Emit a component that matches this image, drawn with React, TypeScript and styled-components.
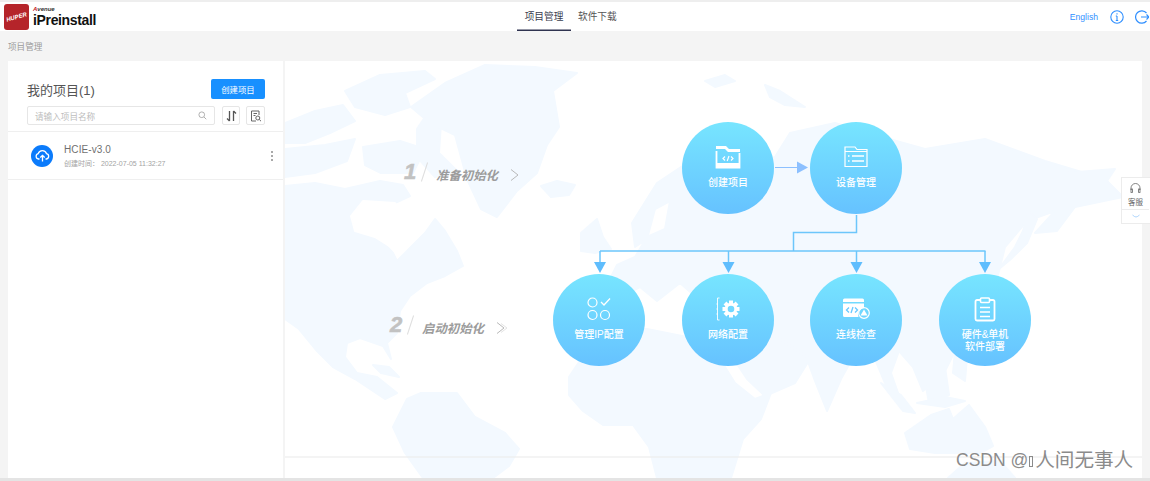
import React from 'react';
import styled, { createGlobalStyle } from 'styled-components';

const GlobalStyle = createGlobalStyle`
  html, body {
    margin: 0;
    padding: 0;
    background: #f4f4f4;
    font-family: "Liberation Sans", "Noto Sans CJK SC", sans-serif;
  }
  * {
    box-sizing: border-box;
  }
`;

const Page = styled.div`
  width: 1150px;
  height: 481px;
  overflow: hidden;
  position: relative;
  background: #f4f4f4;
  border-top: 2px solid #eeeeee;
  border-bottom: 3px solid #e4e4e4;
`;

// ---------------------------------------------
// header
// ---------------------------------------------
const Header = styled.header`
  height: 29px;
  background: #fff;
  display: grid;
  grid-template-columns: 517px auto 1fr;
  align-items: stretch;
`;

const Brand = styled.div`
  display: flex;
  align-items: center;
  gap: 4px;
  padding-left: 4px;
`;

const LogoMark = styled.div`
  width: 25px;
  height: 26px;
  border-radius: 3px;
  background: #b5242a;
  color: #fff;
  font-size: 6px;
  font-style: italic;
  font-weight: 700;
  display: flex;
  align-items: center;
  justify-content: center;
  overflow: hidden;

  span {
    transform: rotate(-16deg);
  }
`;

const BrandText = styled.div`
  display: flex;
  flex-direction: column;

  small {
    font-size: 6px;
    line-height: 6px;
    margin-bottom: 1px;
    font-weight: 700;
    font-style: italic;
    color: #333;

    b {
      color: #c4161c;
    }
  }

  strong {
    font-size: 14px;
    line-height: 15px;
    font-weight: 700;
    letter-spacing: -0.35px;
    color: #111;
  }
`;

const Tabs = styled.nav`
  display: flex;
  gap: 7px;
`;

const Tab = styled.div<{ $active?: boolean }>`
  width: ${({ $active }) => ($active ? '54px' : '38px')};
  font-size: 9.7px;
  line-height: 29px;
  text-align: center;
  white-space: nowrap;
  color: ${({ $active }) => ($active ? '#3a3d50' : '#555')};
  box-shadow: ${({ $active }) => ($active ? 'inset 0 -1.5px 0 #2f3350' : 'none')};
`;

const HeaderActions = styled.div`
  display: flex;
  justify-content: flex-end;
  align-items: center;
  padding-right: 1px;
  color: #2f8fff;

  span {
    font-size: 8.6px;
    margin-right: 12px;
  }

  svg + svg {
    margin-left: 11px;
  }
`;

const Breadcrumb = styled.div`
  height: 30px;
  padding-left: 8px;
  display: flex;
  align-items: center;
  font-size: 8.6px;
  color: #9a9a9a;
`;

// ---------------------------------------------
// layout
// ---------------------------------------------
const Content = styled.div`
  display: flex;
  gap: 2px;
  padding-left: 8px;
  height: 417px;
`;

const Sidebar = styled.aside`
  width: 275px;
  background: #fff;
`;

const SidebarHead = styled.div`
  padding: 18px 18px 6px 19px;
  border-bottom: 1px solid #efefef;
`;

const TitleRow = styled.div`
  display: flex;
  justify-content: space-between;
  align-items: center;
  height: 20px;
  margin-bottom: 7px;

  h2 {
    margin: 0;
    font-size: 13px;
    font-weight: 400;
    color: #555;
  }
`;

const PrimaryButton = styled.button`
  width: 54px;
  height: 20px;
  border: 0;
  padding: 0;
  border-radius: 2px;
  background: #1890ff;
  color: #fff;
  font: inherit;
  font-size: 8.4px;
`;

const SearchRow = styled.div`
  display: flex;
  align-items: center;
  gap: 6px;
`;

const SearchBox = styled.div`
  width: 189px;
  height: 19px;
  margin-right: 1px;
  padding: 0 7px;
  border: 1px solid #e6e6e6;
  border-radius: 2px;
  display: flex;
  align-items: center;
  justify-content: space-between;
  font-size: 8.6px;
  color: #bdbdbd;
`;

const IconButton = styled.div`
  width: 18px;
  height: 19px;
  border: 1px solid #e6e6e6;
  border-radius: 2px;
  display: flex;
  align-items: center;
  justify-content: center;
  color: #666;

  & + & {
    width: 19px;
  }
`;

const ProjectRow = styled.div`
  height: 48px;
  padding: 0 10px 0 23px;
  border-bottom: 1px solid #efefef;
  display: flex;
  align-items: center;
  gap: 11px;
`;

const Avatar = styled.div`
  width: 22px;
  height: 22px;
  border-radius: 50%;
  background: #0b7bfb;
  display: flex;
  align-items: center;
  justify-content: center;
`;

const ProjectInfo = styled.div`
  flex: 1;

  h3 {
    margin: 0 0 3px;
    font-size: 10px;
    line-height: 13px;
    font-weight: 400;
    letter-spacing: 0.1px;
    color: #6f6f6f;
  }

  p {
    margin: 0;
    font-size: 7px;
    line-height: 9px;
    color: #a3a3a3;
  }
`;

const MoreDots = styled.div`
  display: flex;
  flex-direction: column;
  gap: 2px;

  i {
    width: 2px;
    height: 2px;
    border-radius: 50%;
    background: #8d8d8d;
  }
`;

// ---------------------------------------------
// diagram canvas
// ---------------------------------------------
const Main = styled.main`
  width: 857px;
  position: relative;
  background: #fff;
  overflow: hidden;
`;

const CanvasLayer = styled.svg`
  position: absolute;
  inset: 0;
`;

const BottomLine = styled.div`
  position: absolute;
  left: 0;
  right: 0;
  bottom: 20px;
  height: 2px;
  background: rgba(236, 236, 236, 0.6);
`;

const Node = styled.div<{ $cx: number; $cy: number }>`
  position: absolute;
  left: ${({ $cx }) => $cx - 46}px;
  top: ${({ $cy }) => $cy - 46}px;
  width: 92px;
  height: 92px;
  border-radius: 50%;
  padding-top: 22px;
  background: linear-gradient(180deg, #77e5ff 0%, #66c2ff 100%);
  color: #fff;
  display: flex;
  flex-direction: column;
  align-items: center;
`;

const NodeIcon = styled.div`
  height: 26px;
  display: flex;
  align-items: center;
  justify-content: center;
`;

const NodeLabel = styled.div`
  margin-top: 7px;
  font-size: 10px;
  line-height: 11.5px;
  font-weight: 500;
  text-align: center;
`;

const Step = styled.div<{ $x: number; $y: number }>`
  position: absolute;
  left: ${({ $x }) => $x}px;
  top: ${({ $y }) => $y}px;
  display: flex;
  align-items: center;
  color: #9c9c9c;

  em {
    width: 19px;
    font-size: 22px;
    line-height: 24px;
    font-weight: 700;
    color: #c2c2c2;
    -webkit-text-stroke: 0.6px #c2c2c2;
  }

  i {
    width: 1px;
    height: 20px;
    margin: 0 11px 0 1px;
    background: #dedede;
    transform: rotate(18deg);
  }

  strong {
    width: 74px;
    margin-top: 6px;
    font-size: 12.4px;
    font-style: italic;
    font-weight: 700;
    white-space: nowrap;
  }

  svg {
    margin-top: 6px;
  }
`;

const SideWidget = styled.div`
  position: absolute;
  left: 1121px;
  top: 175px;
  width: 32px;
  height: 47px;
  background: #fff;
  border: 1px solid #ececec;
  color: #666;
  text-align: center;
  padding-right: 3px;
  font-size: 7.5px;
`;

const WidgetTop = styled.div`
  height: 32px;
  padding-top: 5px;
  border-bottom: 1px solid #ececec;
  display: flex;
  flex-direction: column;
  align-items: center;
  gap: 3px;
`;

const WidgetBottom = styled.div`
  display: flex;
  justify-content: center;
  padding-top: 4px;
`;

const Watermark = styled.div`
  position: absolute;
  left: 956px;
  top: 445px;
  font-size: 17.5px;
  line-height: 26px;
  white-space: nowrap;
  color: #8b8b8b;
  text-shadow: 0 0 1px #fff;
  display: flex;
  align-items: center;

  b {
    font-size: 19.6px;
    font-weight: 400;
  }
`;

const Tofu = styled.span`
  width: 4px;
  height: 11px;
  margin: 2px 2px 0 1px;
  border: 1px solid #8b8b8b;
`;

// ---------------------------------------------
// drawings
// ---------------------------------------------
const LAND = [
  // north america
  'M0 125 L30 122 L60 128 L95 120 L118 124 L125 135 L110 142 L78 140 L66 155 L70 170 L95 178 L108 192 L112 200 L140 172 L150 158 L160 170 L172 190 L178 205 L160 215 L142 222 L125 235 L115 250 L112 272 L102 282 L106 298 L98 285 L75 277 L62 282 L60 296 L72 312 L92 316 L112 332 L100 338 L70 318 L48 306 L32 290 L14 268 L0 258 Z',
  // arctic islands
  'M0 62 L30 50 L58 44 L70 60 L45 72 L20 82 L0 82 Z',
  'M0 88 L40 84 L70 78 L62 100 L30 112 L0 116 Z',
  'M60 30 L95 14 L140 10 L150 18 L120 32 L125 46 L100 54 L70 46 Z',
  'M78 86 L115 80 L140 88 L128 112 L96 112 L80 104 Z',
  'M140 56 L156 62 L154 92 L172 110 L150 116 L132 96 L132 68 Z',
  // greenland
  'M126 46 L160 22 L200 4 L250 6 L292 12 L268 30 L274 66 L262 84 L252 112 L232 130 L212 156 L196 148 L182 118 L170 74 L145 62 Z',
  // iceland
  'M256 125 L272 120 L290 124 L284 134 L266 136 Z',
  // south america
  'M122 338 L136 332 L172 332 L190 356 L220 372 L234 388 L224 405 L208 417 L138 417 L120 392 L108 366 Z',
  // caribbean
  'M88 304 L104 306 L114 316 L96 312 Z',
  // britain + europe + asia
  'M296 172 L312 158 L318 176 L326 188 L310 192 L296 190 Z',
  'M347 162 L372 122 L405 100 L430 94 L440 112 L432 128 L455 110 L490 96 L505 72 L550 62 L590 74 L640 88 L700 78 L760 100 L820 118 L838 136 L790 146 L772 170 L750 172 L770 150 L742 160 L720 186 L712 218 L700 244 L686 262 L672 286 L660 310 L638 330 L628 306 L614 290 L606 312 L618 346 L600 322 L590 298 L566 300 L556 318 L542 350 L530 320 L522 298 L500 290 L488 290 L470 276 L440 260 L420 244 L395 222 L372 240 L355 226 L335 236 L320 228 L332 204 L350 196 L362 176 L380 168 L385 140 L370 148 L362 178 L350 186 Z',
  // middle east
  'M430 258 L480 268 L525 298 L510 322 L480 335 L462 318 L440 285 Z',
  // africa
  'M284 316 L300 292 L325 270 L362 268 L402 276 L430 290 L450 322 L470 338 L486 332 L476 358 L458 378 L446 417 L372 417 L364 386 L348 364 L318 364 L298 350 L284 334 Z',
  // japan + kamchatka
  'M714 208 L730 186 L738 170 L744 150 L752 158 L742 182 L726 198 Z',
  'M780 112 L830 108 L818 126 L800 134 L790 128 Z',
  // indonesia, philippines
  'M596 322 L616 334 L630 352 L618 350 Z',
  'M640 320 L660 306 L664 334 L644 342 Z',
  'M670 290 L682 296 L680 320 L668 312 Z',
  'M632 342 L660 336 L680 340 L660 346 Z',
  // australia
  'M620 372 L646 354 L664 348 L668 358 L684 344 L700 366 L708 385 L695 392 L650 392 L625 388 Z',
  // arctic russia
  'M420 20 L440 14 L450 20 L430 26 Z',
  'M480 24 L495 30 L520 46 L500 44 L485 36 Z',
  // bottom of the map, south of the line
  'M663 417 L680 402 L715 400 L730 417 Z',
];

const WhiteLakes = [
  'M66 155 L78 140 L110 142 L118 152 L104 166 L112 190 L90 176 L70 170 Z',
  'M432 128 L468 126 L462 138 L440 140 Z',
];

function WorldMap() {
  return (
    <CanvasLayer width={857} height={417} viewBox="0 0 857 417" strokeLinejoin="round" strokeWidth={2}>
      {LAND.map((d) => (
        <path key={d} d={d} fill="#f3f9ff" stroke="#f3f9ff" />
      ))}
      {WhiteLakes.map((d) => (
        <path key={d} d={d} fill="#fff" stroke="#fff" />
      ))}
    </CanvasLayer>
  );
}

function Connectors() {
  const arrowColor = '#6cc6fb';
  return (
    <CanvasLayer width={857} height={417} viewBox="0 0 857 417" fill="none">
      <path d="M490 106.5 H513" stroke="#8cc0ff" strokeWidth={1} />
      <path d="M512 100.5 L523 106.5 L512 112.5 Z" fill="#8cc0ff" />
      <path
        d="M571.5 154 V171.5 H508.5 V190 M315 190 H700.5"
        stroke={arrowColor}
        strokeWidth={1.5}
      />
      {[315, 443.5, 571.5, 700].map((x) => (
        <g key={x}>
          <path d={`M${x} 190 V202`} stroke={arrowColor} strokeWidth={1.5} />
          <path d={`M${x - 6} 201 H${x + 6} L${x} 212 Z`} fill="#5fbdfd" />
        </g>
      ))}
    </CanvasLayer>
  );
}

function FolderCodeIcon() {
  return (
    <svg width="26" height="24" viewBox="0 0 26 24" fill="none">
      <path d="M1 1 H11 L14 4 H25 V7 H13 L10 4 H1 Z" fill="#fff" />
      <path d="M1.5 6 V22.5 H24.5 V8" stroke="#fff" strokeWidth="1.8" />
      <path d="M1 18 H25 V23 H1 Z" fill="#fff" />
      <path
        d="M10 11.5 L8 13.5 L10 15.5 M16 11.5 L18 13.5 L16 15.5 M14 11 L12.2 16"
        stroke="#fff"
        strokeWidth="1.2"
      />
    </svg>
  );
}

function FolderListIcon() {
  return (
    <svg width="24" height="22" viewBox="0 0 24 22" fill="none" stroke="#fff" strokeWidth="1.2">
      <path d="M1 20.5 V1 H11 L13 3.5 H23 V20.5 Z" />
      <path d="M1 5.5 H23" strokeWidth="1" />
      <path d="M4 10 H5.5 M4 15 H5.5 M8 10 H20 M8 15 H20" strokeWidth="1.4" />
    </svg>
  );
}

function CirclesCheckIcon() {
  return (
    <svg width="24" height="24" viewBox="0 0 24 24" fill="none" stroke="#fff" strokeWidth="1.2">
      <circle cx="5.5" cy="5.5" r="4.5" />
      <circle cx="5.5" cy="18" r="4.5" />
      <circle cx="18" cy="18" r="4.5" />
      <path d="M14 5 L17 8 L23 1.5" strokeWidth="1.3" />
    </svg>
  );
}

function GearIcon() {
  const teeth = [0, 45, 90, 135, 180, 225, 270, 315];
  return (
    <svg width="24" height="24" viewBox="0 0 24 24" fill="none">
      <path d="M3.5 1 H1.5 V23 H3.5" stroke="#fff" strokeWidth="0.9" />
      <path d="M0.5 7 H2 M0.5 12 H2 M0.5 17 H2" stroke="#fff" strokeWidth="1" />
      {teeth.map((a) => (
        <rect key={a} x="13" y="3.5" width="4" height="4" fill="#fff" transform={`rotate(${a} 15 12)`} />
      ))}
      <circle cx="15" cy="12" r="4.8" stroke="#fff" strokeWidth="3" />
    </svg>
  );
}

function BrowserCodeIcon() {
  return (
    <svg width="27" height="22" viewBox="0 0 27 22" fill="none">
      <path
        d="M1.5 0.5 H19.5 A1.5 1.5 0 0 1 21 2 V4 H0 V2 A1.5 1.5 0 0 1 1.5 0.5 Z M0 5.5 H21 V10 A6.5 6.5 0 0 0 15.5 19 H1.5 A1.5 1.5 0 0 1 0 17.5 Z"
        fill="#fff"
      />
      <path
        d="M6 9.5 L3.5 12 L6 14.5 M12 9.5 L14.5 12 L12 14.5 M10 9 L8 15"
        stroke="#67c8ff"
        strokeWidth="1.3"
      />
      <circle cx="21" cy="15" r="5.3" stroke="#fff" strokeWidth="1.2" />
      <path d="M21 11.5 L24.5 17.5 H17.5 Z" fill="#fff" />
    </svg>
  );
}

function ClipboardIcon() {
  return (
    <svg width="22" height="25" viewBox="0 0 22 25" fill="none" stroke="#fff">
      <path d="M6 3 H3 A1.5 1.5 0 0 0 1.5 4.5 V22 A1.5 1.5 0 0 0 3 23.5 H19 A1.5 1.5 0 0 0 20.5 22 V4.5 A1.5 1.5 0 0 0 19 3 H16" strokeWidth="1.8" />
      <rect x="6.5" y="1" width="9" height="4.5" rx="1" strokeWidth="1.6" />
      <path d="M6 10.5 H16 M6 15 H16 M6 19.5 H16" strokeWidth="1.4" />
    </svg>
  );
}

function SearchIcon() {
  return (
    <svg width="9" height="9" viewBox="0 0 12 12" fill="none" stroke="#a0a0a0" strokeWidth="1.1">
      <circle cx="5" cy="5" r="3.8" />
      <path d="M8 8 L11 11" />
    </svg>
  );
}

function SortIcon() {
  return (
    <svg width="11" height="12" viewBox="0 0 11 12" fill="none" stroke="#555" strokeWidth="1.3">
      <path d="M3.5 1 V11 M3.5 11 L1 8.5" />
      <path d="M7.5 11 V1 M7.5 1 L10 3.5" />
    </svg>
  );
}

function DocSearchIcon() {
  return (
    <svg width="12" height="12" viewBox="0 0 12 12" fill="none" stroke="#666" strokeWidth="1">
      <path d="M6 11 H1.5 V1 H9 V5" />
      <path d="M3.5 3.5 H7 M3.5 5.5 H5.5" />
      <circle cx="7.8" cy="8" r="2" />
      <path d="M9.3 9.5 L11 11.2" />
    </svg>
  );
}

function CloudUploadIcon() {
  return (
    <svg width="15" height="13" viewBox="0 0 15 13" fill="none" stroke="#fff" strokeWidth="1.3">
      <path d="M4.5 10 H3.5 A2.7 2.7 0 0 1 3.2 4.7 A4.3 4.3 0 0 1 11.5 4.7 A2.7 2.7 0 0 1 11.5 10 H10.5" />
      <path d="M7.5 12.5 V6.5 M5.3 8.5 L7.5 6.3 L9.7 8.5" />
    </svg>
  );
}

function InfoIcon() {
  return (
    <svg width="14" height="14" viewBox="0 0 14 14" fill="none" stroke="#2f8fff" strokeWidth="1.1">
      <circle cx="7" cy="7" r="6.2" />
      <path d="M7 6 V10.5 M5.8 10.5 H8.2 M5.8 6 H7" />
      <path d="M7 3.2 V4.4" />
    </svg>
  );
}

function ExitIcon() {
  return (
    <svg width="14" height="14" viewBox="0 0 14 14" fill="none" stroke="#2f8fff" strokeWidth="1.2">
      <path d="M11.5 3 A6.2 6.2 0 1 0 11.5 11" />
      <path d="M6 7 H14 M11.5 4.5 L14 7 L11.5 9.5" />
    </svg>
  );
}

function HeadsetIcon() {
  return (
    <svg width="11" height="10" viewBox="0 0 11 10" fill="none" stroke="#666" strokeWidth="0.8">
      <path d="M1 7 V5 A4.5 4.5 0 0 1 10 5 V7" />
      <rect x="1" y="6" width="1.4" height="3.4" />
      <rect x="8.6" y="6" width="1.4" height="3.4" />
    </svg>
  );
}

function SmallChevrons() {
  return (
    <svg width="8" height="4" viewBox="0 0 8 4" fill="none" stroke="#8dc4fb" strokeWidth="0.7">
      <path d="M0.5 1 L2.5 2.5 L4 3 L5.5 2.5 L7.5 1" />
    </svg>
  );
}

function StepChevron({ double }: { double?: boolean }) {
  return (
    <svg width="13" height="14" viewBox="0 0 13 14" fill="none" stroke="#b9b9b9" strokeWidth="1">
      <path d="M1 1.5 L8 7 L1 12.5" />
      {double && <path d="M5 2.5 L11 7 L5 11.5" stroke="#e4e4e4" />}
    </svg>
  );
}

const NODES = [
  { cx: 443, cy: 107, icon: <FolderCodeIcon />, label: ['创建项目'] },
  { cx: 571, cy: 107, icon: <FolderListIcon />, label: ['设备管理'] },
  { cx: 314, cy: 259, icon: <CirclesCheckIcon />, label: ['管理IP配置'] },
  { cx: 443, cy: 259, icon: <GearIcon />, label: ['网络配置'] },
  { cx: 571, cy: 259, icon: <BrowserCodeIcon />, label: ['连线检查'] },
  { cx: 700, cy: 259, icon: <ClipboardIcon />, label: ['硬件&单机', '软件部署'] },
];

export default function App() {
  return (
    <>
      <GlobalStyle />
      <Page>
        <Header>
          <Brand>
            <LogoMark>
              <span>HUPER</span>
            </LogoMark>
            <BrandText>
              <small>
                <b>A</b>venue
              </small>
              <strong>iPreinstall</strong>
            </BrandText>
          </Brand>
          <Tabs>
            <Tab $active>项目管理</Tab>
            <Tab>软件下载</Tab>
          </Tabs>
          <HeaderActions>
            <span>English</span>
            <InfoIcon />
            <ExitIcon />
          </HeaderActions>
        </Header>

        <Breadcrumb>项目管理</Breadcrumb>

        <Content>
          <Sidebar>
            <SidebarHead>
              <TitleRow>
                <h2>我的项目(1)</h2>
                <PrimaryButton>创建项目</PrimaryButton>
              </TitleRow>
              <SearchRow>
                <SearchBox>
                  请输入项目名称
                  <SearchIcon />
                </SearchBox>
                <IconButton>
                  <SortIcon />
                </IconButton>
                <IconButton>
                  <DocSearchIcon />
                </IconButton>
              </SearchRow>
            </SidebarHead>
            <ProjectRow>
              <Avatar>
                <CloudUploadIcon />
              </Avatar>
              <ProjectInfo>
                <h3>HCIE-v3.0</h3>
                <p>创建时间： 2022-07-05 11:32:27</p>
              </ProjectInfo>
              <MoreDots>
                <i />
                <i />
                <i />
              </MoreDots>
            </ProjectRow>
          </Sidebar>

          <Main>
            <WorldMap />
            <BottomLine />
            <Connectors />
            <Step $x={119} $y={99}>
              <em>1</em>
              <i />
              <strong>准备初始化</strong>
              <StepChevron />
            </Step>
            <Step $x={105} $y={252}>
              <em>2</em>
              <i />
              <strong>启动初始化</strong>
              <StepChevron double />
            </Step>
            {NODES.map(({ cx, cy, icon, label }) => (
              <Node key={label[0]} $cx={cx} $cy={cy}>
                <NodeIcon>{icon}</NodeIcon>
                <NodeLabel>
                  {label.map((line) => (
                    <div key={line}>{line}</div>
                  ))}
                </NodeLabel>
              </Node>
            ))}
          </Main>
        </Content>

        <SideWidget>
          <WidgetTop>
            <HeadsetIcon />
            客服
          </WidgetTop>
          <WidgetBottom>
            <SmallChevrons />
          </WidgetBottom>
        </SideWidget>

        <Watermark>
          CSDN @<Tofu /><b>人间无事人</b>
        </Watermark>
      </Page>
    </>
  );
}
